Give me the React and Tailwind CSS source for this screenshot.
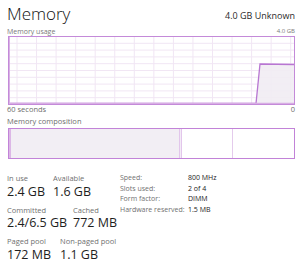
import React from "react";

const font = { fontFamily: '"Open Sans", "Noto Sans", sans-serif' };

// vertical grid lines of the usage chart
const vLines = Array.from({ length: 15 }, (_, i) => 9 + i * 19.55);
const hLines = Array.from({ length: 9 }, (_, i) => 0.5 + (i + 1) * 6.8);

function UsageChart() {
  return (
    <svg width="287" height="69" viewBox="0 0 287 69" className="block ml-[1px]">
      <rect x="0" y="0" width="287" height="69" fill="#ffffff" />
      {hLines.map((y) => (
        <line key={`h${y}`} x1="0" x2="287" y1={y} y2={y} stroke="#f1e6f4" strokeWidth="1" />
      ))}
      {vLines.map((x) => (
        <line key={`v${x}`} x1={x} x2={x} y1="0" y2="69" stroke="#f1e6f4" strokeWidth="1" />
      ))}
      <polygon points="248,68 252,28 286,28.5 286,68" fill="#f1ecf3" fillOpacity="0.9" />
      <polyline
        points="0,67.5 248,67.5 252,28 286,28.5"
        fill="none"
        stroke="#b876d2"
        strokeWidth="1.3"
      />
      <line x1="0" x2="287" y1="67.8" y2="67.8" stroke="#d7ade3" strokeWidth="2" />
      <line x1="1" x2="1" y1="0" y2="69" stroke="#d9b3e5" strokeWidth="2" />
      <rect x="0.5" y="0.5" width="286" height="68" fill="none" stroke="#c48ad9" strokeWidth="1" />
    </svg>
  );
}

function Stat({ label, value, className = "" }) {
  return (
    <div className={className}>
      <div className="text-[7.5px] leading-[10px] text-[#707070] whitespace-nowrap">{label}</div>
      <div className="text-[12.5px] leading-[14px] text-[#1e1e1e] mt-[1.5px] whitespace-nowrap">{value}</div>
    </div>
  );
}

const hw = [
  ["Speed:", "800 MHz"],
  ["Slots used:", "2 of 4"],
  ["Form factor:", "DIMM"],
  ["Hardware reserved:", "1.5 MB"],
];

export default function App() {
  return (
    <div className="w-[300px] h-[270px] bg-white pl-[7px] pr-[5px] overflow-hidden" style={font}>
      {/* header */}
      <div className="flex justify-between items-start h-[27px]">
        <div className="mt-[5px] text-[17px] leading-[18px] font-light text-[#111]">Memory</div>
        <div className="mt-[11px] text-[9px] leading-[10px] text-[#2a2a2a]">4.0 GB Unknown</div>
      </div>

      <div className="flex justify-between h-[9px] text-[7px] leading-[9px] text-[#7a7a7a]">
        <span>Memory usage</span>
        <span className="text-[6px]">4.0 GB</span>
      </div>

      <UsageChart />

      <div className="flex justify-between h-[9px] text-[7.5px] leading-[9px] text-[#6e6e6e]">
        <span>60 seconds</span>
        <span>0</span>
      </div>

      <div className="mt-[3px] h-[9px] text-[7.5px] leading-[9px] text-[#6e6e6e]">Memory composition</div>

      {/* composition bar */}
      <div className="mt-[2px] ml-[1px] w-[287px] h-[31px] flex border border-[#c283d8]">
        <div className="w-[170px] bg-[#f2eef4] border-l-2 border-[#dcb7e6]" />
        <div className="w-[3px] bg-[#f3ebf6] border-x border-[#e2c6eb]" />
        <div className="w-[51px] border-r border-[#e4cbec]" />
        <div className="flex-1" />
      </div>

      {/* stats */}
      <div className="flex mt-[14px]">
        <div className="w-[113px]">
          <div className="flex">
            <Stat label="In use" value="2.4 GB" className="w-[46px]" />
            <Stat label="Available" value="1.6 GB" />
          </div>
          <div className="flex mt-[6px]">
            <Stat label="Committed" value="2.4/6.5 GB" className="w-[66px]" />
            <Stat label="Cached" value="772 MB" />
          </div>
          <div className="flex mt-[6px]">
            <Stat label="Paged pool" value="172 MB" className="w-[53px]" />
            <Stat label="Non-paged pool" value="1.1 GB" />
          </div>
        </div>
        <div className="flex flex-col text-[7px] leading-[10.5px]">
          {hw.map(([k, v]) => (
            <div key={k} className="flex whitespace-nowrap">
              <span className="w-[68px] text-[#707070]">{k}</span>
              <span className="text-[#222]">{v}</span>
            </div>
          ))}
        </div>
      </div>
    </div>
  );
}
